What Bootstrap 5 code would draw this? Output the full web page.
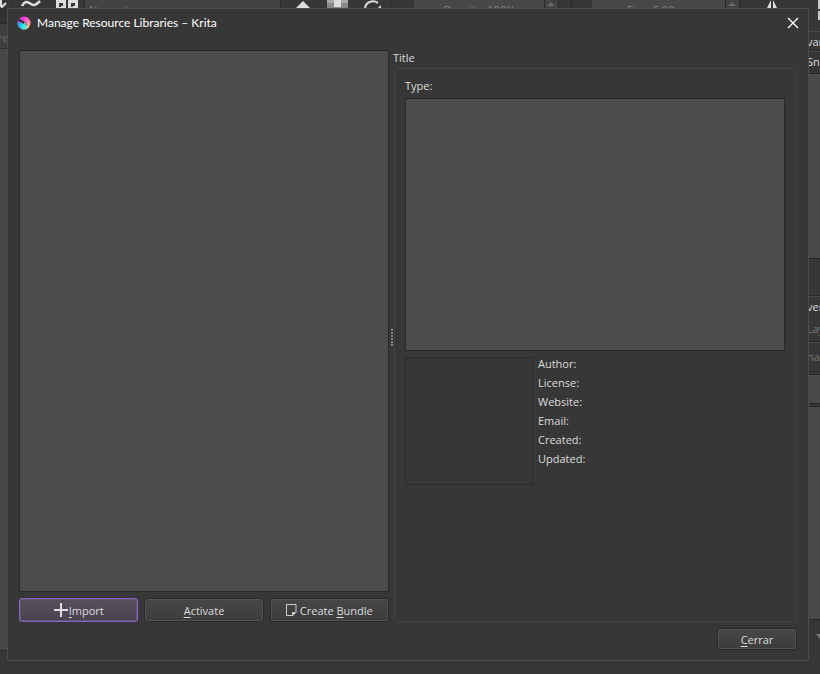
<!DOCTYPE html>
<html lang="en">
<head>
<meta charset="utf-8">
<meta name="viewport" content="width=device-width, initial-scale=1">
<title>Manage Resource Libraries – Krita</title>
<link href="https://cdn.jsdelivr.net/npm/bootstrap@5.3.0/dist/css/bootstrap.min.css" rel="stylesheet">
<style>
body{background:#373737;color:#dcdcdc;font:11px/19px "Open Sans","Noto Sans",sans-serif}
.workspace{display:grid;grid-template:8px minmax(0,1fr) 13px / 7px minmax(0,1fr) 11px;height:100vh;overflow:hidden}
.toolstrip{grid-column:1/3;background:#373737}
.toolstrip svg{display:block;flex:none}
.combo{background:#434343;color:#777;border-left:1px solid #2c2c2c;line-height:14px;padding-top:3px}
.spin{flex:none;background:#484848;color:#858585;line-height:14px;padding-top:3px}
.spin-opacity{width:130px}
.spin-size{width:133px}
.stepper{width:15px;border:solid #2b2b2b;border-width:0 1px;background:#434343}
.left-dock{grid-row:2;background:#474747}
.left-dock .tab-a{height:16px;background:#323232;border-bottom:2px solid #292929}
.left-dock .tab-b{height:25px;background:#3e3e3e;color:#6d6d65;border-bottom:1px solid #303030;line-height:28px;text-indent:-2px}
.left-dock .tail{height:11px;background:#373737;border-top:1px solid #292929}
.right-dock{grid-column:3;grid-row:1/3;background:#373737;line-height:20px;text-indent:-2px}
.right-dock>div{flex:none;white-space:nowrap}
.rule-dark{border-bottom:1px solid #292929}
.rule-light{border-top:1px solid #4a4a4a}
.pane{background:#4a4a4a}
.dim{color:#777}
.h-icons{height:31px}
.h-tab{height:20px}
.h-snap{height:23px}
.h-history{height:185px}
.h-gap{height:37px}
.h-mode{height:30px;line-height:27px}
.h-thin{height:3px}
.h-layer{height:29px}
.h-list{height:213px}
.dialog-window{grid-column:2;grid-row:2;background:#373737;border:1px solid #4b4b4b}
.title-bar{height:28px;color:#fff;padding:0 8px 0 9px}
.title-bar h1{font:400 12px/28px Lato,"Open Sans",sans-serif;margin-left:6px}
.close-x{width:14px;height:28px;color:#fff}
.dialog-body{padding:13px 11px 10px}
.split{display:grid;grid-template-columns:minmax(0,370fr) 5px minmax(0,403fr)}
.well{background:#4b4b4b;border:1px solid #292929;border-radius:0;min-height:0}
.tool-buttons{margin-top:6px;gap:6px}
.kbtn{height:24px;border:1px solid #2a2a2a;border-radius:3px;background:linear-gradient(#474747,#3c3c3c);box-shadow:inset 0 0 0 1px #515151;color:#dcdcdc;font-size:11px;line-height:20px;padding:2px 6px 0}
.kbtn:hover{color:#fff;border-color:#222;background:#484848}
.kbtn.chosen{border-color:#8d62cf;background:linear-gradient(#574f5a,#4c4350);box-shadow:inset 0 0 0 1px #625967}
.kbtn u{text-underline-offset:2px}
.kbtn svg{margin-bottom:2px}
.icon-plus{margin-right:1px}
.icon-page{margin-right:3px}
.grip{padding-top:4px}
.grip span{width:2px;height:2px;background:#858585;margin-bottom:1px}
.details{border:1px solid #424242;border-radius:3px;padding:7px 11px 10px 10px;margin-top:2px}
.bundle-title{line-height:16px;margin-left:-1px}
.description{height:253px;resize:none;color:#dcdcdc;outline:0;margin-top:3px}
.meta-row{margin-top:6px}
.thumb{width:128px;height:128px;border:1px solid #2b2b2b}
.facts{margin-left:5px;margin-top:-3px}
.facts dt{font-weight:400}
.dialog-foot{margin-top:6px}
.dialog-foot .kbtn{width:80px;height:22px;line-height:18px;padding-top:1px}
</style>
<script src="https://cdn.jsdelivr.net/npm/bootstrap@5.3.0/dist/js/bootstrap.bundle.min.js" defer></script>
</head>
<body>
<div class="workspace">
  <div class="toolstrip d-flex overflow-hidden" aria-hidden="true">
    <svg width="84" height="8"><path d="M1 0v6M-2 3l4 4 4-4" stroke="#ddd" stroke-width="2" fill="none"/><path d="M12.500 0v8" stroke="#2c2c2c"/><path d="M22 6c3-6 6-4 9-2s5 1 9-3" stroke="#ddd" stroke-width="2.500" fill="none"/><path d="M56 0h10v8H56zM68 0h10v8H68z" fill="#ddd"/><path d="M59 3h4v3h-2v1h-2zM71 3h4v3h-2v1h-2z" fill="#373737"/></svg>
    <div class="combo col ps-1">Normal</div>
    <svg width="134" height="8"><path d="M.5 0v8M110.500 0v8" stroke="#2c2c2c"/><path d="M16 8l7-7 7 7z" fill="#ddd"/><path d="M47 0h21v8H47z" fill="#888"/><path d="M47 0h7v3h-7zM61 0h7v3h-7z" fill="#aaa"/><path d="M54 0h7v7h-7z" fill="#ddd"/><path d="M85 8c1-7 9-8 13-5" stroke="#ddd" stroke-width="2" fill="none"/><path d="M98 8l3-3v3z" fill="#ddd"/></svg>
    <div class="spin spin-opacity text-center">Opacity: 100%</div>
    <div class="stepper"><svg width="13" height="8"><path d="M2 6l4-4 4 4z" fill="#696969"/></svg></div>
    <svg width="33" height="8"><path d="M12.500 0v8" stroke="#292929"/></svg>
    <div class="spin spin-size text-center">Size: 5.00 px</div>
    <div class="stepper"><svg width="13" height="8"><path d="M2 6l4-4 4 4z" fill="#696969"/></svg></div>
    <svg width="69" height="8"><path d="M27 8l4-8v8zM33 8V0l4 8z" fill="#ddd"/></svg>
  </div>
  <div class="left-dock d-flex flex-column overflow-hidden" aria-hidden="true">
    <div class="tab-a"></div><div class="tab-b">re</div><div class="flex-fill"></div><div class="tail"></div>
  </div>
  <main class="dialog-window d-flex flex-column" role="dialog" aria-labelledby="dialog-name">
    <header class="title-bar d-flex align-items-center">
      <svg width="14" height="14" viewBox="0 0 14 14" aria-hidden="true" class="flex-shrink-0"><defs><linearGradient id="warm" x2="1" y2="1"><stop stop-color="#d820ff"/><stop offset=".35" stop-color="#ff40e0"/><stop offset=".65" stop-color="#ff90a0"/><stop offset="1" stop-color="#ffe080"/></linearGradient><linearGradient id="cool" x2="1" y2="0"><stop stop-color="#2090ff"/><stop offset=".5" stop-color="#20f2e1"/><stop offset="1" stop-color="#ffd086"/></linearGradient></defs><circle cx="7" cy="7" r="6.500" fill="url(#warm)"/><path d="M.5 6A6.500 6.500 0 0 0 12 11L9 8z" fill="url(#cool)"/><path d="M1 3l2 0 5 3 3 4-4-2-6-3z" fill="#353449"/><path d="M7 6l4 4-4-2z" fill="#b4b4d0"/></svg>
      <h1 id="dialog-name" class="my-0 me-0 flex-fill">Manage Resource Libraries – Krita</h1>
      <button type="button" class="close-x btn p-0 border-0 d-flex align-items-center justify-content-center" aria-label="Close"><svg width="12" height="12" viewBox="0 0 12 12"><path d="M1 1l10 10M11 1L1 11" stroke="#fff" stroke-width="1.300"/></svg></button>
    </header>
    <div class="dialog-body d-flex flex-column flex-fill">
      <div class="split flex-fill">
        <section class="d-flex flex-column" aria-label="Libraries">
          <div class="well flex-fill" role="listbox" aria-label="Resource libraries" tabindex="0"></div>
          <div class="tool-buttons d-flex">
            <button type="button" class="kbtn chosen btn col d-flex align-items-center justify-content-center"><svg width="14" height="14" class="icon-plus" aria-hidden="true"><path d="M7 0v14M0 7h14" stroke="#ddd" stroke-width="2"/></svg><span><u>I</u>mport</span></button>
            <button type="button" class="kbtn btn col"><u>A</u>ctivate</button>
            <button type="button" class="kbtn btn col d-flex align-items-center justify-content-center"><svg width="11" height="12" class="icon-page" aria-hidden="true"><path d="M.5.5h9.500v8L7 11.500H.5z" stroke="#ccc" fill="none"/><path d="M6 12V8h4z" fill="#ccc"/></svg><span>Create <u>B</u>undle</span></button>
          </div>
        </section>
        <div class="grip d-flex flex-column align-items-center justify-content-center" role="separator" aria-orientation="vertical"><span></span><span></span><span></span><span></span><span></span><span></span></div>
        <section class="d-flex flex-column">
          <div class="bundle-title">Title</div>
          <div class="details flex-fill">
            <label for="description" class="d-block">Type:</label>
            <textarea id="description" class="well description d-block w-100" readonly></textarea>
            <div class="meta-row d-flex">
              <div class="thumb flex-shrink-0" role="img" aria-label="Thumbnail"></div>
              <dl class="facts mb-0"><dt>Author:</dt><dt>License:</dt><dt>Website:</dt><dt>Email:</dt><dt>Created:</dt><dt>Updated:</dt></dl>
            </div>
          </div>
        </section>
      </div>
      <footer class="dialog-foot d-flex justify-content-end"><button type="button" class="kbtn btn"><u>C</u>errar</button></footer>
    </div>
  </main>
  <div class="right-dock d-flex flex-column overflow-hidden" aria-hidden="true">
    <div class="h-icons"><svg class="d-block ms-auto" width="2" height="20"><path d="M0 0h2v9H0zM0 11h2v9H0z" fill="#ccc"/></svg></div>
    <div class="h-tab rule-light rule-dark">vanz</div>
    <div class="h-snap rule-light rule-dark">Snap</div>
    <div class="h-history pane rule-dark"></div>
    <div class="h-gap rule-dark"></div>
    <div class="h-snap rule-light">vers</div>
    <div class="h-snap dim rule-dark">Layers</div>
    <div class="h-mode dim rule-light rule-dark">nal</div>
    <div class="h-thin rule-dark"></div>
    <div class="h-layer pane rule-dark"></div>
    <div class="h-thin rule-dark"></div>
    <div class="h-list pane rule-dark"></div>
    <div class="pt-2"><svg class="d-block ms-auto mt-1" width="4" height="8"><path d="M0 2h8L4 7z" fill="#777"/></svg></div>
  </div>
</div>
</body>
</html>
